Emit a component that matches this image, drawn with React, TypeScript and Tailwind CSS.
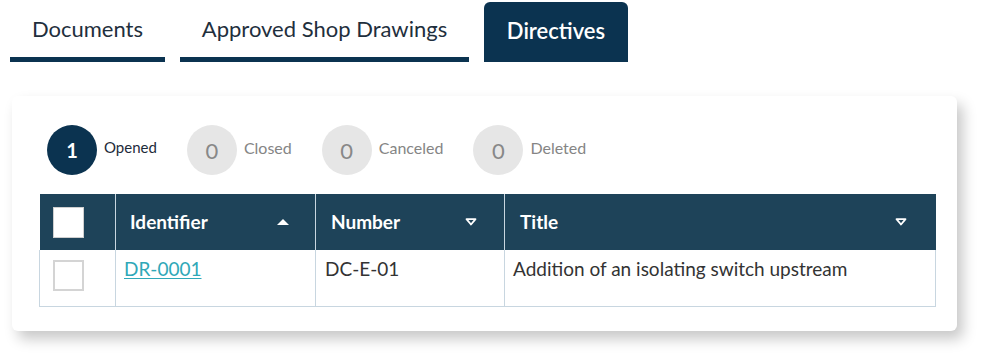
const statuses = [
  { count: 1, label: "Opened", active: true },
  { count: 0, label: "Closed", active: false },
  { count: 0, label: "Canceled", active: false },
  { count: 0, label: "Deleted", active: false },
];

function Tab({ label, active, width }: { label: string; active?: boolean; width: string }) {
  if (active) {
    return (
      <div className={`${width} h-[60px] rounded-t-md bg-[#0b3350] flex items-center justify-center pb-[4px] text-white text-[22px] font-semibold`}>
        {label}
      </div>
    );
  }
  return (
    <div className={`${width} h-[60px] flex flex-col`}>
      <div className="flex-1 flex items-center justify-center pb-[2px] text-[22px] text-[#1f2f3d]">{label}</div>
      <div className="h-[5px] bg-[#0b3350]" />
    </div>
  );
}

function SortUp() {
  return (
    <svg width="14" height="8" viewBox="0 0 14 8">
      <path d="M1 7 L7 1 L13 7 Z" fill="white" />
    </svg>
  );
}

function SortDown() {
  return (
    <svg width="12" height="8" viewBox="0 0 12 8">
      <path d="M1.5 1.2 L10.5 1.2 L6 6.5 Z" fill="none" stroke="white" strokeWidth="1.8" strokeLinejoin="round" />
    </svg>
  );
}

export default function App() {
  return (
    <div className="w-[982px] h-[360px] bg-white font-['Lato',sans-serif] overflow-hidden">
      <div className="flex gap-[15px] pl-[10px] pt-[2px]">
        <Tab label="Documents" width="w-[155px]" />
        <Tab label="Approved Shop Drawings" width="w-[289px]" />
        <Tab label="Directives" width="w-[144px]" active />
      </div>

      <div className="ml-[12px] mt-[34px] w-[945px] h-[235px] bg-white rounded-md shadow-[6px_8px_14px_rgba(0,0,0,0.22)] pt-[29px] px-[27px]">
        <div className="flex items-center gap-[30px] pl-[8px]">
          {statuses.map((s) => (
            <div key={s.label} className="flex items-center gap-[7px]">
              <div
                className={
                  s.active
                    ? "w-[50px] h-[50px] rounded-full bg-[#0b3350] flex items-center justify-center text-white text-[20px] font-bold"
                    : "w-[50px] h-[50px] rounded-full bg-[#e6e6e6] flex items-center justify-center text-[#888] text-[22px]"
                }
              >
                {s.count}
              </div>
              <span className={`-mt-[5px] ${s.active ? "text-[15px] text-[#1d2b3a]" : "text-[16px] text-[#858585]"}`}>{s.label}</span>
            </div>
          ))}
        </div>

        <table className="mt-[19px] w-[896px] border-collapse table-fixed">
          <colgroup>
            <col className="w-[76px]" />
            <col className="w-[200px]" />
            <col className="w-[189px]" />
            <col className="w-[431px]" />
          </colgroup>
          <thead>
            <tr className="h-[56px] bg-[#1e4359] text-white text-[19px] font-bold">
              <th className="border-r border-[#c8d6e0] p-0">
                <div className="ml-[13px] w-[31px] h-[31px] bg-white border border-[#cfcfcf]" />
              </th>
              <th className="border-r border-[#c8d6e0] px-[14px] text-left">
                <div className="flex items-center justify-between pr-[11px]">
                  <span>Identifier</span>
                  <SortUp />
                </div>
              </th>
              <th className="border-r border-[#c8d6e0] px-[15px] text-left">
                <div className="flex items-center justify-between pr-[12px]">
                  <span>Number</span>
                  <SortDown />
                </div>
              </th>
              <th className="px-[15px] text-left">
                <div className="flex items-center justify-between pr-[14px]">
                  <span>Title</span>
                  <SortDown />
                </div>
              </th>
            </tr>
          </thead>
          <tbody>
            <tr className="h-[56px] align-top text-[19px] text-[#333] border-b border-x border-[#c8d6e0]">
              <td className="border-r border-[#c8d6e0] p-0 pt-[10px]">
                <div className="ml-[13px] w-[31px] h-[31px] bg-white border-2 border-[#d4d4d4]" />
              </td>
              <td className="border-r border-[#c8d6e0] px-[8px] pt-[5px]">
                <a className="text-[#2fa8b8] underline underline-offset-2">DR-0001</a>
              </td>
              <td className="border-r border-[#c8d6e0] px-[9px] pt-[5px]">DC-E-01</td>
              <td className="px-[8px] pt-[5px]">Addition of an isolating switch upstream</td>
            </tr>
          </tbody>
        </table>
      </div>
    </div>
  );
}
